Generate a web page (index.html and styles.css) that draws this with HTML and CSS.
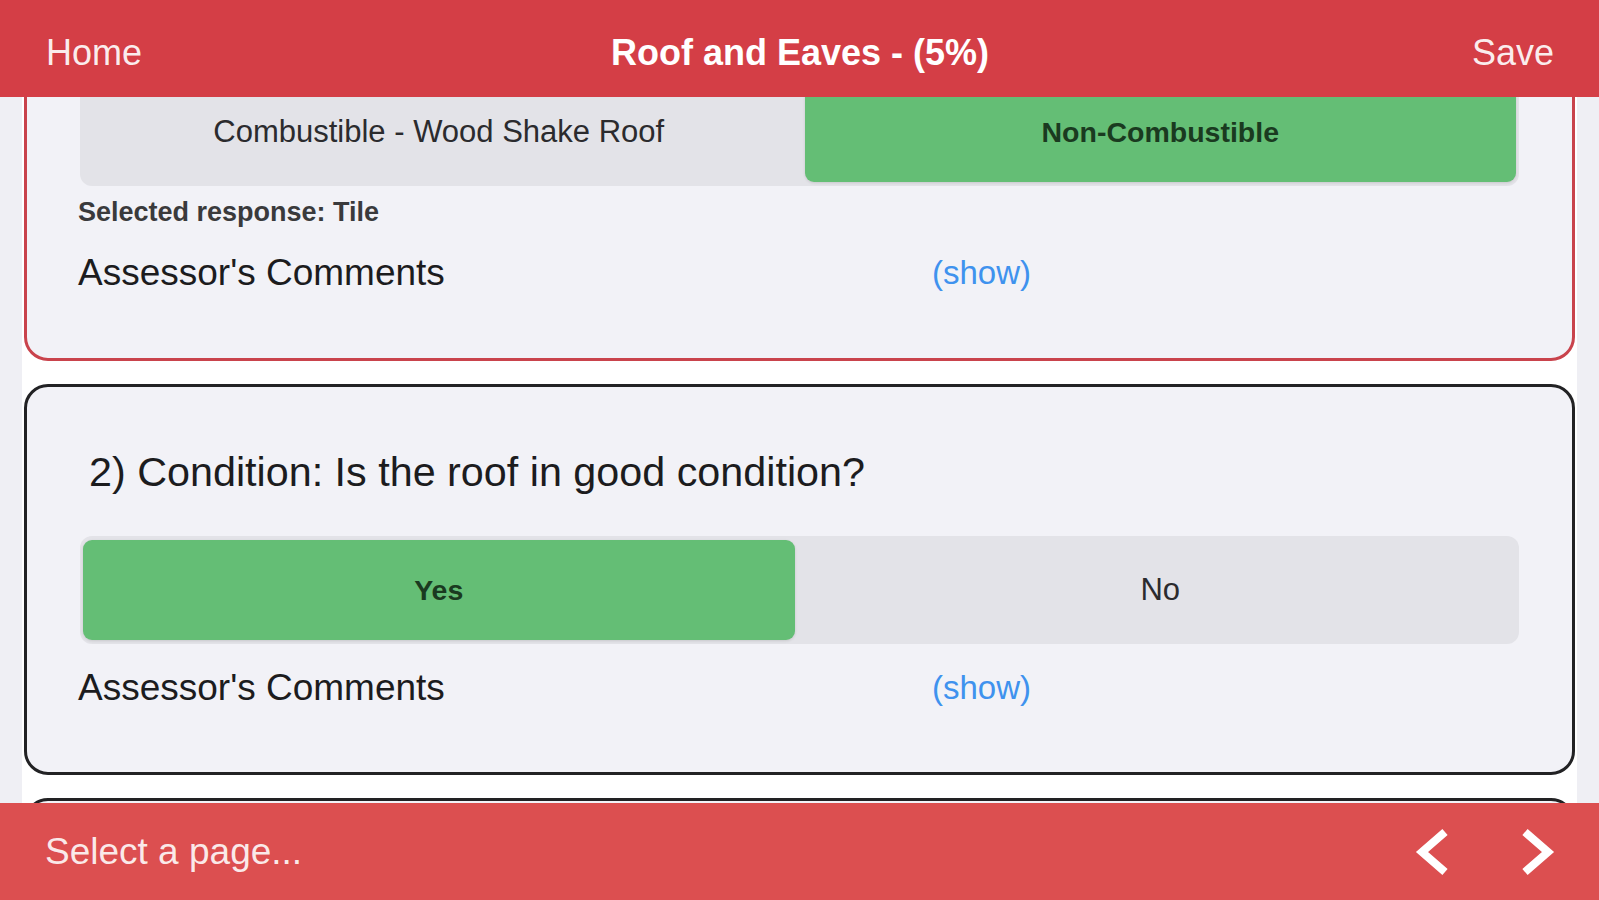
FILE: index.html
```html
<!DOCTYPE html>
<html lang="en">
<head>
<meta charset="utf-8">
<title>Roof and Eaves</title>
<link rel="stylesheet" href="styles.css">
</head>
<body>
<div class="app">
  <header class="topbar">
    <span class="nav-link nav-left">Home</span>
    <h1 class="title">Roof and Eaves - (5%)</h1>
    <span class="nav-link nav-right">Save</span>
  </header>

  <main class="scroll">
    <div class="column">
      <section class="card card-active card-first">
        <div class="segmented">
          <div class="segment">Combustible - Wood Shake Roof</div>
          <div class="segment selected">Non-Combustible</div>
        </div>
        <p class="selected-response">Selected response: Tile</p>
        <div class="comments">
          <span class="comments-label">Assessor's Comments</span>
          <span class="show-link">(show)</span>
        </div>
      </section>

      <section class="card">
        <h2 class="question">2) Condition: Is the roof in good condition?</h2>
        <div class="segmented segmented-spaced">
          <div class="segment selected">Yes</div>
          <div class="segment">No</div>
        </div>
        <div class="comments comments-spaced">
          <span class="comments-label">Assessor's Comments</span>
          <span class="show-link">(show)</span>
        </div>
      </section>

      <section class="card card-next"></section>
    </div>
  </main>

  <footer class="bottombar">
    <span class="page-select">Select a page...</span>
    <div class="pager">
      <svg class="chevron" width="40" height="52" viewBox="0 0 40 52" aria-label="Previous">
        <path d="M33 6 L10 26 L33 46" fill="none" stroke="#ffffff" stroke-width="8" stroke-linejoin="miter" stroke-linecap="butt"/>
      </svg>
      <svg class="chevron" width="40" height="52" viewBox="0 0 40 52" aria-label="Next">
        <path d="M7 6 L30 26 L7 46" fill="none" stroke="#ffffff" stroke-width="8" stroke-linejoin="miter" stroke-linecap="butt"/>
      </svg>
    </div>
  </footer>
</div>
</body>
</html>
```

FILE: styles.css
```css
* {
  box-sizing: border-box;
  margin: 0;
  padding: 0;
}

html, body {
  height: 100%;
}

body {
  background: #efeff4;
  font-family: "Liberation Sans", Arial, sans-serif;
  color: #1c1c1e;
  overflow: hidden;
}

.app {
  height: 900px;
  display: flex;
  flex-direction: column;
}

/* ---------- top bar ---------- */
.topbar {
  flex: none;
  height: 97px;
  padding: 9px 45px 0 46px;
  background: #d43e46;
  display: grid;
  grid-template-columns: 1fr auto 1fr;
  align-items: center;
  color: #ffffff;
}

.nav-link {
  font-size: 36px;
  line-height: 36px;
  color: rgba(255, 255, 255, 0.92);
}

.nav-right {
  justify-self: end;
}

.title {
  font-size: 36px;
  line-height: 36px;
  font-weight: 700;
  color: #ffffff;
}

/* ---------- scroll area ---------- */
.scroll {
  flex: 1;
  overflow: hidden;
}

.column {
  min-height: 100%;
  margin: 0 22px;
  padding: 0 2px;
  background: #ffffff;
  display: flex;
  flex-direction: column;
  gap: 23px;
}

.card {
  background: #f2f2f7;
  border: 3px solid #222224;
  border-radius: 24px;
  padding: 61px 51px 62px 51px;
  flex: none;
}

.card-active {
  border-color: #c9434c;
}

.card-first {
  margin-top: -52px;
  padding-top: 30px;
  padding-bottom: 63px;
}

.card-next {
  height: 200px;
}

.question {
  font-size: 41.3px;
  line-height: 48px;
  font-weight: 400;
  padding-left: 11px;
  color: #1c1c1e;
}

/* ---------- segmented control ---------- */
.segmented {
  margin: 0 2px;
  height: 108px;
  padding: 4px 3px;
  background: #e3e3e8;
  border-radius: 12px;
  display: grid;
  grid-template-columns: 1fr 1fr;
  column-gap: 10px;
}

.segmented-spaced {
  margin-top: 40px;
}

.segment {
  display: flex;
  align-items: center;
  justify-content: center;
  font-size: 31px;
  color: #2b2b2e;
  border-radius: 9px;
}

.segment.selected {
  background: #64be75;
  font-size: 28.5px;
  font-weight: 700;
  color: #1a3a20;
  box-shadow: 0 1px 3px rgba(0, 0, 0, 0.12);
}

/* ---------- text rows ---------- */
.selected-response {
  margin-top: 10px;
  font-size: 27px;
  line-height: 32px;
  font-weight: 700;
  color: #3a3a3c;
}

.comments {
  margin-top: 23px;
  display: grid;
  grid-template-columns: 854px 1fr;
  align-items: center;
  height: 44px;
}

.comments-spaced {
  margin-top: 22px;
}

.comments-label {
  font-size: 37px;
  line-height: 44px;
  color: #1c1c1e;
}

.show-link {
  font-size: 33px;
  line-height: 44px;
  color: #3f92ee;
}

/* ---------- bottom bar ---------- */
.bottombar {
  flex: none;
  height: 97px;
  padding: 0 41px 0 45px;
  background: #dc4f50;
  display: flex;
  align-items: center;
  justify-content: space-between;
}

.page-select {
  font-size: 37px;
  line-height: 37px;
  color: rgba(255, 255, 255, 0.88);
}

.pager {
  display: flex;
  align-items: center;
  gap: 66px;
}

.chevron {
  display: block;
}
```
